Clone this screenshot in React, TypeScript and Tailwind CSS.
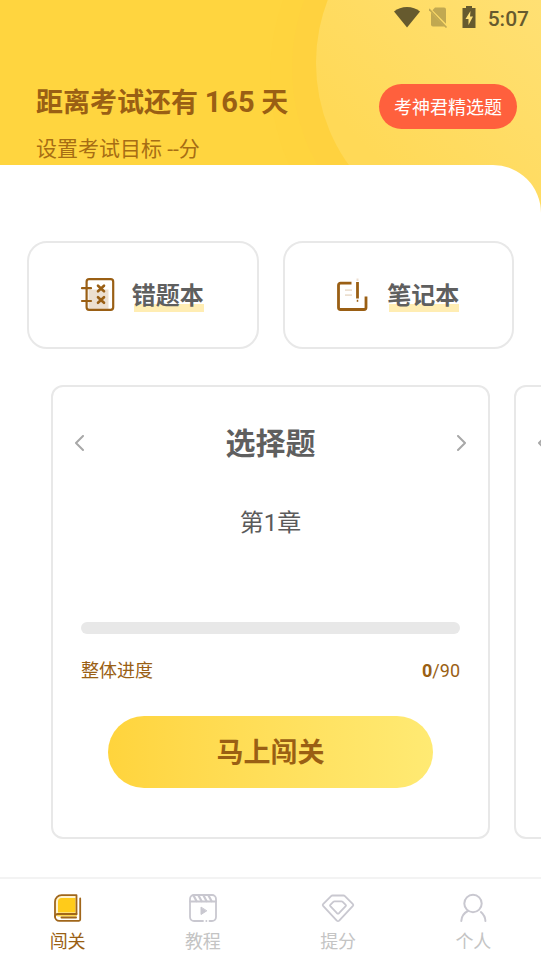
import React, { useState } from "react";

const tabs = [
  { id: "play", label: "闯关", icon: BookIcon },
  { id: "course", label: "教程", icon: ClapperIcon },
  { id: "score", label: "提分", icon: GemIcon },
  { id: "me", label: "个人", icon: PersonIcon },
];

const current = { title: "选择题", chapter: "第1章", done: 0, total: 90 };

function BookIcon() {
  return (
    <svg width="30" height="32" viewBox="1 0 30 32" fill="none" strokeLinecap="round" strokeLinejoin="round">
      <path d="M4 22V9a5.500 5.500 0 0 1 5.500-5.500H24.500V22Z" fill="#fff3cf" />
      <path d="M6 20.500V9.500A3.500 3.500 0 0 1 9.500 6H23.500v14.500Z" fill="#ffcb1a" />
      <path d="M6 23.500H24" stroke="#ffd84d" strokeWidth="2" />
      <path d="M24.500 22V3.200H9.500A6.500 6.500 0 0 0 3 9.700V24.500a4.300 4.300 0 0 0 4.300 4.300H27a1.200 1.200 0 0 0 1.200-1.200V6.500" stroke="#a0661a" strokeWidth="1.800" />
      <path d="M3 24.800A2.800 2.800 0 0 1 5.800 22H24.500" stroke="#a0661a" strokeWidth="1.800" />
      <path d="M9.500 25.500H24" stroke="#a0661a" strokeWidth="2" />
    </svg>
  );
}

function ClapperIcon() {
  return (
    <svg width="30" height="32" viewBox="0 0 30 32" fill="none" stroke="#c9c8d0" strokeWidth="1.800" strokeLinecap="round" strokeLinejoin="round">
      <path d="M15 29H6a4 4 0 0 1-4-4V7a4 4 0 0 1 4-4h18a4 4 0 0 1 4 4v18a4 4 0 0 1-4 4h-2.500" />
      <path d="M18.300 29h.1" />
      <path d="M2 9.500h26" />
      <path d="M5.500 3.500 8.500 9M10.500 3.500l3 5.500M15.500 3.500l3 5.500M20.500 3.500l3 5.500" strokeWidth="2.200" />
      <path d="M13 15.500v7l5.500-3.500Z" fill="#c9c8d0" strokeWidth="1" />
    </svg>
  );
}

function GemIcon() {
  return (
    <svg width="34" height="32" viewBox="0 0 34 32" fill="none" stroke="#c9c8d0" strokeWidth="1.800" strokeLinejoin="round">
      <path d="M11.500 3.500h11q.8 0 1.400.6l8 8q.8.900 0 1.800L18.200 28.600q-1.200 1-2.400 0L2.100 13.900q-.8-.900 0-1.800l8-8q.6-.6 1.400-.6Z" />
      <path d="M13.500 9.300h7q.7 0 1.200.5l3 3q.6.700 0 1.400l-6.700 7q-1 .8-2 0l-6.700-7q-.6-.7 0-1.400l3-3q.5-.5 1.200-.5Z" />
    </svg>
  );
}

function PersonIcon() {
  return (
    <svg width="30" height="32" viewBox="0 0 30 32" fill="none" stroke="#c9c8d0" strokeWidth="2" strokeLinecap="round">
      <circle cx="15" cy="11.500" r="8.700" />
      <path d="M3.300 29c.2-4.500 2.300-7.800 6.500-10M27.400 29c-.2-3.500-1.600-6.500-4.500-8.900" />
    </svg>
  );
}

function WrongBookIcon() {
  return (
    <svg width="36" height="36" viewBox="0 1 36 36" fill="none" stroke="#9a5f14" strokeWidth="2.200" strokeLinecap="round">
      <rect x="8.500" y="13.500" width="20" height="19.500" fill="#ecdfd0" stroke="none" />
      <rect x="6.600" y="3.200" width="26.600" height="30.600" rx="2.500" />
      <path d="M2 12.200h9M2 25h9" />
      <path d="M18 9.700l6 5.600M24 9.700l-6 5.600M18 21.200l6 5.600M24 21.200l-6 5.600" strokeWidth="2.600" />
    </svg>
  );
}

function NoteIcon() {
  return (
    <svg width="36" height="36" viewBox="0 1 36 36" fill="none" stroke="#9a5f14" strokeWidth="2.800">
      <path d="M16.500 7.200H5.500a2 2 0 0 0-2 2V31.500a2 2 0 0 0 2 2H29a2 2 0 0 0 2-2V20.500" />
      <path d="M22.500 6v16.500" />
      <path d="M22.500 23.800v2" strokeWidth="1.500" />
      <path d="M22.500 2.500v2.500" stroke="#ecdfd0" strokeWidth="2" />
      <path d="M10 14.200h7M10 19.200h7" stroke="#ecdfd0" strokeWidth="1.800" />
    </svg>
  );
}

function StatusBar() {
  return (
    <div className="flex h-9 items-center justify-end pr-3 text-[#665a2e]">
      <svg className="mr-2" width="28" height="24" viewBox="0 1 28 24" fill="currentColor">
        <path d="M14 22.500 1 6.500C4.500 3.500 9 2 14 2s9.500 1.500 13 4.500Z" />
      </svg>
      <svg className="mr-3" width="20" height="24" viewBox="1 1 20 24" fill="currentColor" opacity="0.4">
        <path d="M7 2.500h9a2 2 0 0 1 2 2v14.300L4.500 5.200Z" />
        <path d="M3 7.500 17 21.500H5a2 2 0 0 1-2-2Z" />
        <path d="M1 4 18.500 22.500" stroke="currentColor" strokeWidth="1.600" />
      </svg>
      <svg className="mr-[11px]" width="16" height="24" viewBox="0 1 16 24">
        <path d="M5 1h6v2h3.500v20h-13V3H5Z" fill="currentColor" />
        <path d="M9.500 6 4.500 14h3v6l4.500-8.500h-3Z" fill="#ffe279" />
      </svg>
      <span className="pt-0.5 text-[21px] leading-6 font-medium">5:07</span>
    </div>
  );
}

function BookLink({ icon, label }: any) {
  return (
    <button className="flex h-[108px] flex-1 items-center justify-center gap-4 rounded-[20px] border-2 border-[#e8e8e8] bg-white pr-0.5">
      {icon}
      <span className="bg-[linear-gradient(#ffedb3,#ffedb3)] bg-[length:70px_8px] bg-[position:right_0_bottom_2px] bg-no-repeat pt-0.5 text-2xl leading-9 font-bold text-[#5f5f5f]">
        {label}
      </span>
    </button>
  );
}

function Arrow({ left }: any) {
  return (
    <svg width="12" height="18" viewBox="0 1 12 18" fill="none" stroke="#a8a8a8" strokeWidth="2" strokeLinecap="round" strokeLinejoin="round">
      <path d={left ? "M10 2 3 9 10 16" : "M2 2 9 9 2 16"} />
    </svg>
  );
}

function ChapterCard({ item }: any) {
  return (
    <section className="w-full shrink-0 rounded-xl border-2 border-[#e8e8e8] px-7 pt-8 pb-[49px]">
      <div className="-mx-2 flex items-center justify-between">
        <button aria-label="上一个"><Arrow left /></button>
        <h2 className="text-3xl leading-[50px] font-bold text-[#5f5f5f]">{item.title}</h2>
        <button aria-label="下一个"><Arrow /></button>
      </div>
      <p className="mt-9 text-center text-2xl leading-9 text-[#5a5a5a]">{item.chapter}</p>
      <div className="mt-[81px] h-3 overflow-hidden rounded-full bg-[#e8e8e8]">
        <div className="h-full bg-[#ffd53f]" style={{ width: `${(item.done / item.total) * 100}%` }} />
      </div>
      <div className="mt-6 flex items-center justify-between text-lg leading-[26px] text-[#9a5f14]">
        <span>整体进度</span>
        <span><b>{item.done}</b>/{item.total}</span>
      </div>
      <div className="mt-8 px-[27px]">
        <button className="h-[72px] w-full rounded-full bg-linear-to-r from-[#ffd43c] to-[#ffea73] pt-0.5 text-[27px] font-bold text-[#9a5f14]">马上闯关</button>
      </div>
    </section>
  );
}

function NextCard() {
  return (
    <section className="w-full shrink-0 rounded-xl border-2 border-[#e8e8e8] px-5 pt-8">
      <div className="flex h-[50px] items-center">
        <Arrow left />
      </div>
    </section>
  );
}

export default function App() {
  const [tab, setTab] = useState("play");

  return (
    <div className="relative flex min-h-screen flex-col overflow-hidden bg-[#ffd53f] font-[Roboto,'Noto_Sans_CJK_SC',sans-serif]">
      {/* header background circles */}
      <svg className="absolute top-0 right-0" width="280" height="240" viewBox="261 0 280 240">
        <defs>
          <linearGradient id="disc" x1="0" y1="1" x2="1" y2="0">
            <stop offset="0.2" stopColor="#ffd957" />
            <stop offset="0.8" stopColor="#ffe27c" />
          </linearGradient>
        </defs>
        <circle cx="491" cy="75" r="221" fill="#ffd43e" />
        <circle cx="491" cy="68" r="199" fill="#ffd23f" />
        <circle cx="491" cy="63" r="175" fill="url(#disc)" />
      </svg>

      <header className="relative">
        <StatusBar />
        <div className="flex items-start justify-between pt-12 pr-6 pl-9">
          <div className="text-[#9a5f14]">
            <h1 className="text-[27px] leading-[38px] font-bold">
              距离考试还有 <span className="text-[29px] leading-none">165</span> 天
            </h1>
            <p className="mt-3 text-[21px] leading-[31px] text-[#a76d14]">设置考试目标 --分</p>
          </div>
          <button className="h-[45px] rounded-full bg-[#ff603d] px-[15px] pt-0.5 text-lg text-white">考神君精选题</button>
        </div>
      </header>

      <main className="relative flex-1 rounded-tr-[48px] bg-white pt-[76px]">
        <div className="flex gap-6 px-[27px]">
          <BookLink icon={<WrongBookIcon />} label="错题本" />
          <BookLink icon={<NoteIcon />} label="笔记本" />
        </div>
        <div className="mt-9 flex gap-6 px-[51px]">
          <ChapterCard item={current} />
          <NextCard />
        </div>
      </main>

      <nav className="relative flex border-t-2 border-[#f3f3f3] bg-white pt-[13px] pb-[7px]">
        {tabs.map((t) => (
          <button
            key={t.id}
            onClick={() => setTab(t.id)}
            className={`flex flex-1 flex-col items-center gap-1 text-lg leading-7 ${tab === t.id ? "text-[#9a5f14]" : "text-[#c4c4c4]"}`}
          >
            <t.icon />
            {t.label}
          </button>
        ))}
      </nav>
    </div>
  );
}
